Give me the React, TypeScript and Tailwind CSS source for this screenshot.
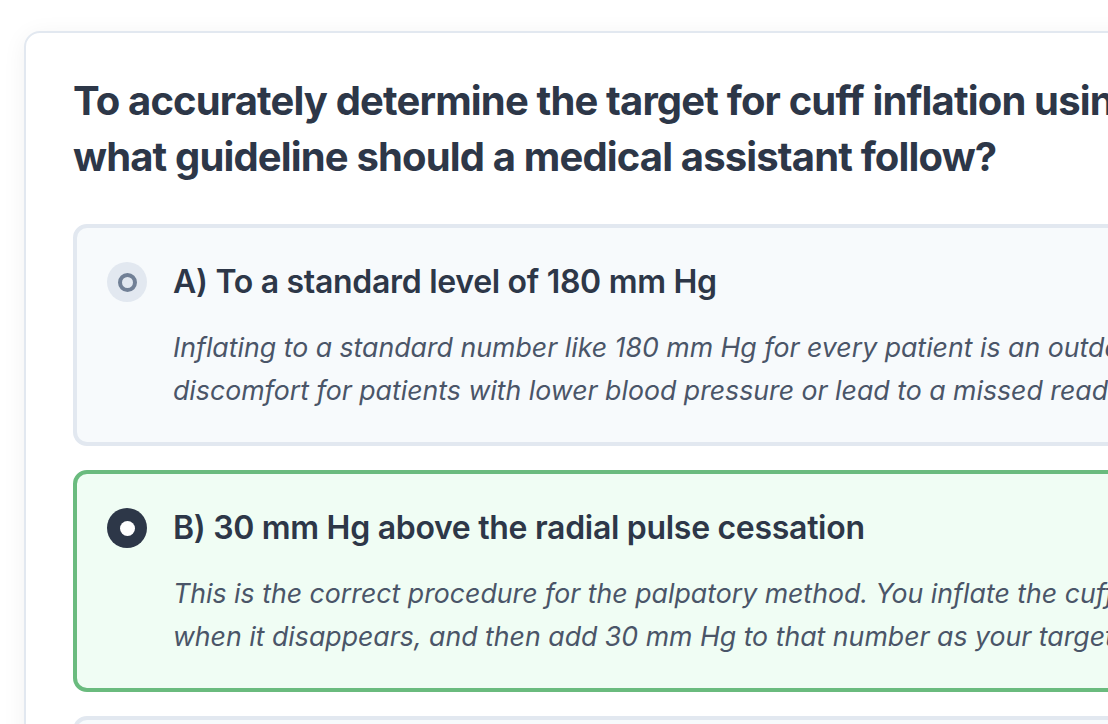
import React from 'react';

interface Option {
  id: string;
  label: string;
  lines: string[];
  state: 'idle' | 'correct';
}

const options: Option[] = [
  {
    id: 'a',
    label: 'A) To a standard level of 180 mm Hg',
    lines: [
      'Inflating to a standard number like 180 mm Hg for every patient is an outdated practice that can cause',
      'discomfort for patients with lower blood pressure or lead to a missed reading in hypertensive patients.',
    ],
    state: 'idle',
  },
  {
    id: 'b',
    label: 'B) 30 mm Hg above the radial pulse cessation',
    lines: [
      'This is the correct procedure for the palpatory method. You inflate the cuff while feeling the radial pulse, note',
      'when it disappears, and then add 30 mm Hg to that number as your target inflation level.',
    ],
    state: 'correct',
  },
  {
    id: 'c',
    label: 'C) 20 mm Hg above the last recorded diastolic reading',
    lines: [
      'The diastolic value is the lowest pressure in the cycle, so inflating just above it would not fully stop the',
      'blood flow through the brachial artery and would give a falsely low systolic reading.',
    ],
    state: 'idle',
  },
];

const Radio: React.FC<{ selected: boolean }> = ({ selected }) =>
  selected ? (
    <div className="w-[40px] h-[40px] shrink-0 rounded-full bg-[#2d3748] flex items-center justify-center">
      <div className="w-[15px] h-[15px] rounded-full bg-white" />
    </div>
  ) : (
    <div className="w-[40px] h-[40px] shrink-0 rounded-full bg-[#e2e8f0] flex items-center justify-center">
      <div className="w-[19px] h-[19px] rounded-full border-[4px] border-[#718096]" />
    </div>
  );

const App: React.FC = () => {
  return (
    <div
      className="w-[1108px] h-[724px] overflow-hidden bg-white pl-[24px] pt-[31px]"
      style={{ fontFamily: 'Inter, "Noto Sans", sans-serif' }}
    >
      <div className="w-[1800px] bg-white border-2 border-[#e2e8f0] rounded-[16px] shadow-[0_4px_24px_rgba(0,0,0,0.06)] px-[47px] pt-[40px] pb-[48px]">
        <h1 className="text-[40px] leading-[56px] font-bold tracking-[-0.85px] text-[#2d3748] mb-[39px]">
          To accurately determine the target for cuff inflation using the palpatory method,
          <br />
          what guideline should a medical assistant follow?
        </h1>

        <div className="flex flex-col gap-[24px]">
          {options.map(opt => {
            const correct = opt.state === 'correct';
            return (
              <div
                key={opt.id}
                className={`rounded-[14px] border-[4px] p-[30px] ${
                  correct ? 'bg-[#f0fdf4] border-[#6abb7e]' : 'bg-[#f7fafc] border-[#e2e8f0]'
                }`}
              >
                <div className="flex items-center gap-[26px]">
                  <Radio selected={correct} />
                  <div className="text-[32px] leading-[48px] font-semibold tracking-[-0.3px] text-[#2d3748]">
                    {opt.label}
                  </div>
                </div>
                <p className="mt-[20px] pl-[66px] text-[26.7px] leading-[43px] italic text-[#4a5568]">
                  {opt.lines[0]}
                  <br />
                  {opt.lines[1]}
                </p>
              </div>
            );
          })}
        </div>
      </div>
    </div>
  );
};

export default App;
